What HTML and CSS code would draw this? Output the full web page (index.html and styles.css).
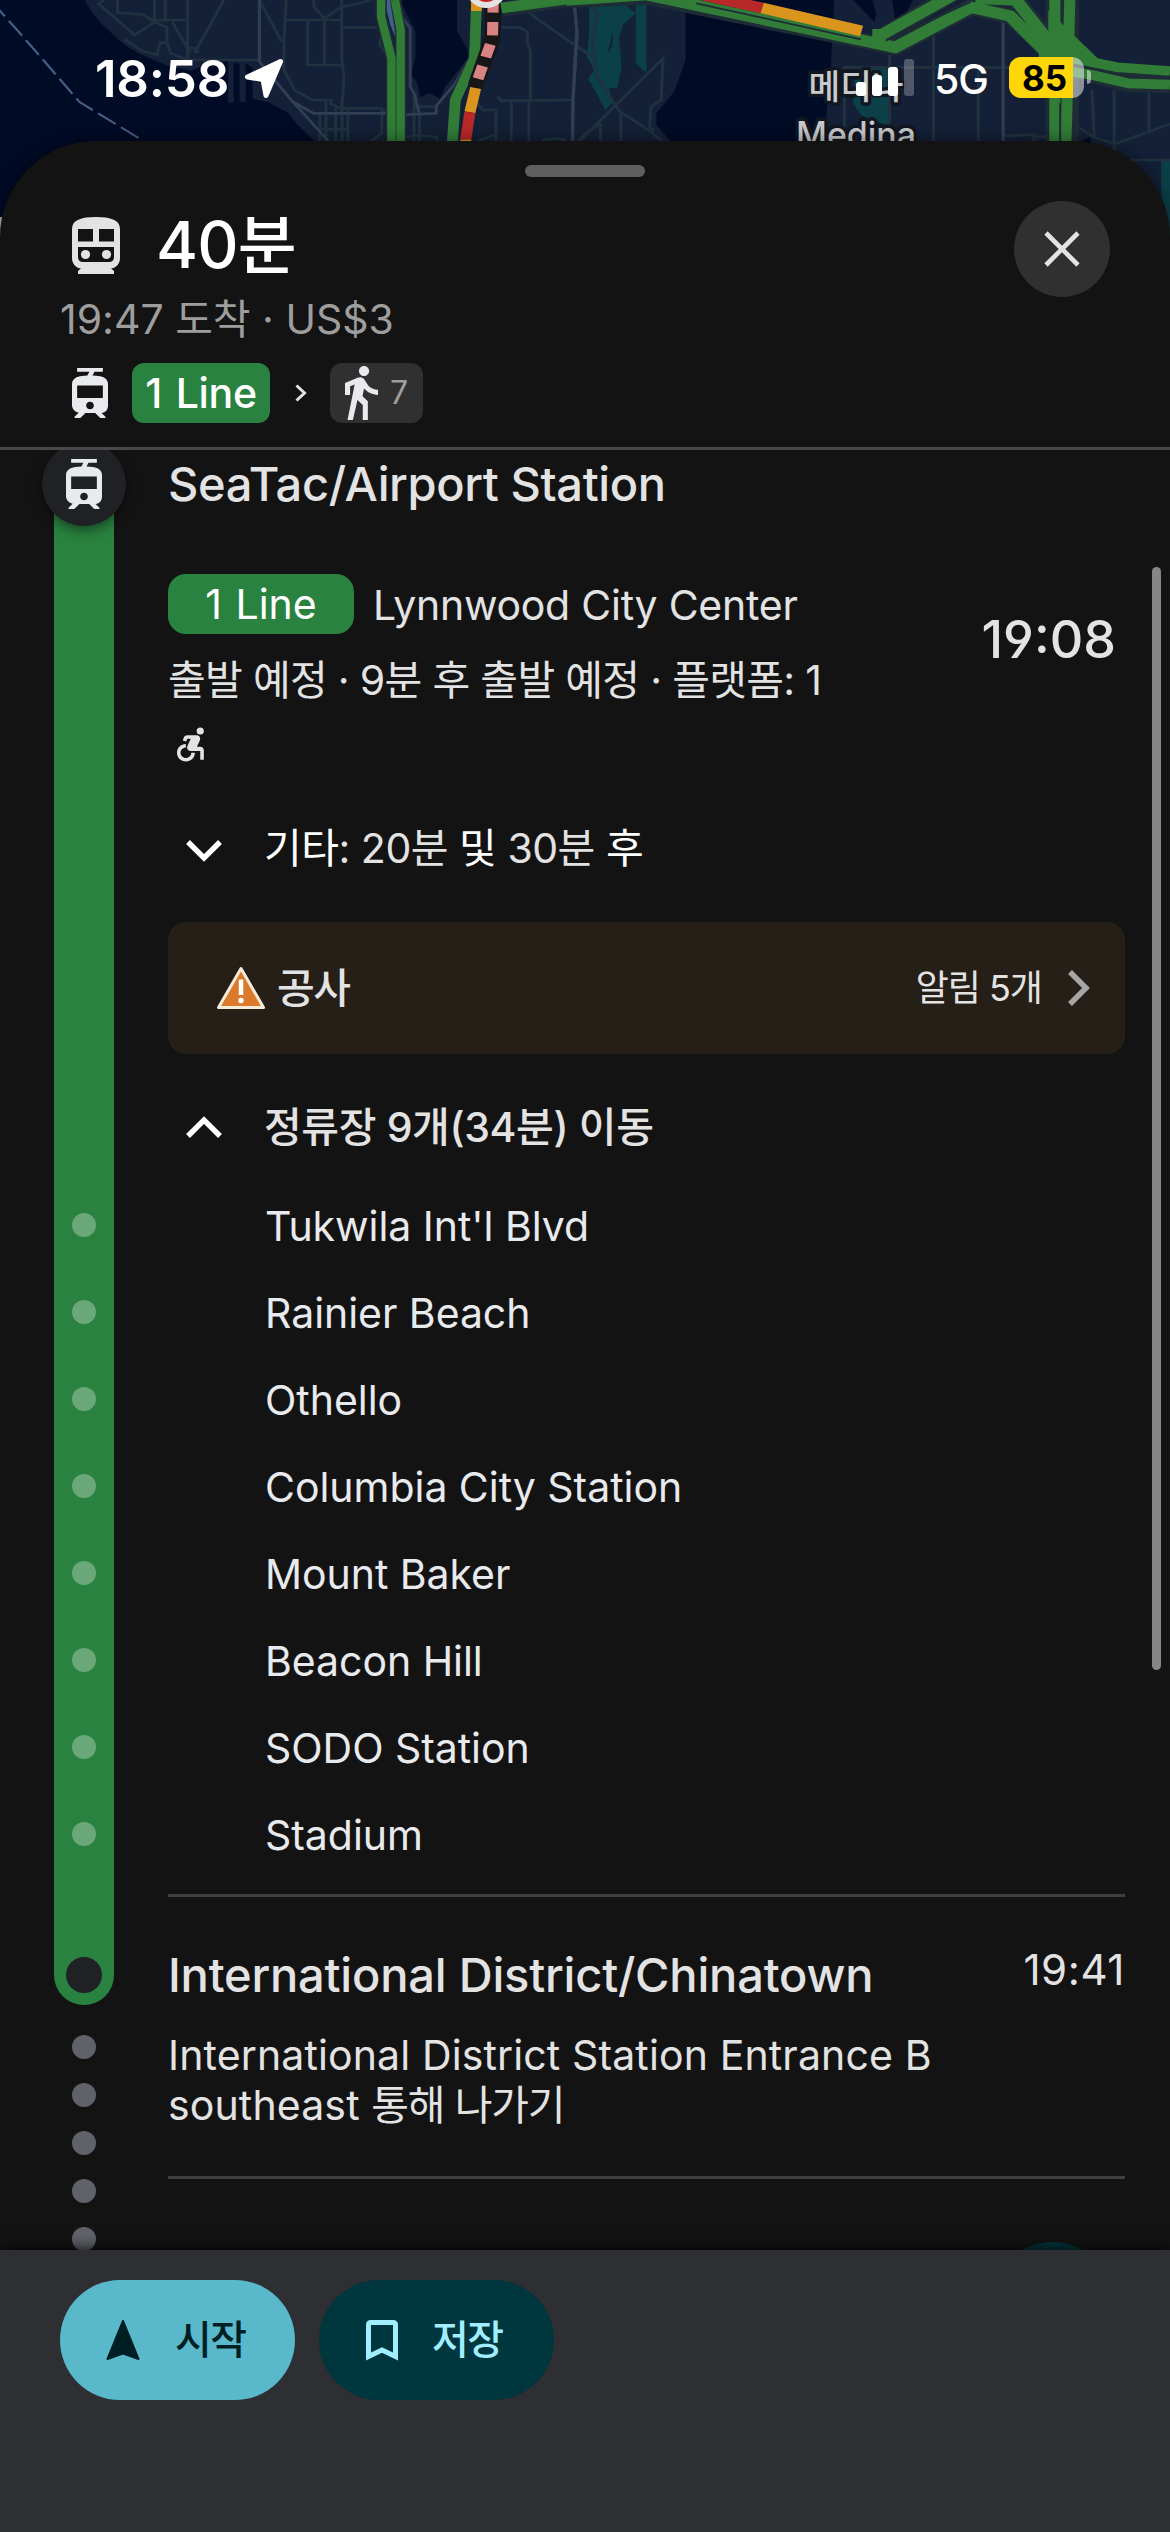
FILE: index.html
```html
<!DOCTYPE html>
<html lang="ko">
<head>
<meta charset="utf-8">
<title>40분 · 1 Line</title>
<link rel="stylesheet" href="styles.css">
</head>
<body>
<svg class="defs" width="0" height="0">
  <symbol id="tram" viewBox="5 2 14 20" preserveAspectRatio="none">
    <path d="M19 16.94V8.5c0-2.79-2.61-3.4-6.01-3.49l.76-1.51H17V2H7v1.5h4.75l-.76 1.52C7.86 5.11 5 5.73 5 8.5v8.44c0 1.45 1.19 2.66 2.59 2.97L6 21.5v.5h2.23l2-2H14l2 2h2v-.5L16.5 20h-.08c1.69 0 2.58-1.37 2.58-3.06zm-7 1.56c-.83 0-1.5-.67-1.5-1.5s.67-1.5 1.5-1.5 1.5.67 1.5 1.5-.67 1.5-1.5 1.5zm5-4.5H7V9h10v5z"/>
  </symbol>
</svg>
<div class="screen">
  <svg class="map" width="1170" height="270" viewBox="0 0 1170 270">
    <rect width="1170" height="270" fill="#132037"/>
    <g transform="scale(.38265 .33333)">
      <path fill="#000b26" d="M0 0H222L236 30L262 68L325 135L370 165L440 198L500 212L545 190L596 182V308H611V190H626V306H642V190L660 205V296L700 306L752 338L775 372L822 423V720H0Z"/>
      <path fill="#000b26" d="M1044 0L1058 30L1086 95V170L1075 225L1090 248L1098 292L1122 279L1150 296L1162 262L1222 176V150L1194 90V0Z"/>
      <path fill="#0b4049" d="M1545 15L1568 10V280L1538 240L1552 210L1537 170Z"/>
      <g fill="none" stroke="#20323f" stroke-width="8">
        <path d="M272 0L258 12L352 105L404 66L374 44L307 38V0M404 66V0M404 60H490M432 0V66M404 66L436 82V128H418L410 165L370 152L325 118M436 128L446 160L490 180H678M490 0V180M585 0L508 160M450 66L498 160M490 145H515V160M678 0L736 125M748 0L742 125V210L770 270L815 300H865V312L890 325H1000M748 60H893M804 60V195H893M848 60V195M893 0V175L899 235L893 325M820 0V20L848 55L893 20L925 14L970 0M893 82H985M1000 90L992 135L1012 165M852 300V423M877 325V423M894 325V423M909 325V423M836 340V423M836 388H912M998 325V400L970 423M1012 330H998M1082 290V423M1096 345V423M1082 320H1140M1050 412L1096 405L1142 412V423M1310 82H1358L1378 95V130L1386 150V300M1300 290L1310 302L1495 300M1240 300L1262 330H1296V423M1336 305V423M1382 305V423M1380 35L1408 60L1548 172M1415 420L1450 415L1480 420M1510 423L1530 400L1568 372M1250 423L1290 405"/>
      </g>
      <g fill="none" stroke="#303f55" stroke-width="8">
        <path d="M678 0V185L765 305L820 340H1010M765 305L858 423M1020 0L1072 85V260L1084 285L1096 344M1060 344L1140 340V318L1190 250L1225 180M1500 0L1507 90L1497 300V423"/>
      </g>
      <path fill="none" stroke="#465f87" stroke-width="6" stroke-dasharray="56 17" d="M-22 5L48 94L208 306L372 421"/>
      <path fill="#41608f" d="M1004 0L1020 75L1036 120L1022 0Z"/>
      <g fill="none" stroke="#1e2c35" stroke-width="30" stroke-linejoin="round">
        <path d="M996 0V50L1023 175V430M1034 0L1047 90V430M1244 20L1240 175L1190 290L1182 430"/>
      </g>
      <g fill="none" stroke="#317d38" stroke-linejoin="round">
        <path stroke-width="22" d="M996 0V50L1023 175V430M1032 0L1047 90V430"/>
        <path stroke-width="28" d="M1245 20L1240 175L1190 300L1182 430"/>
      </g>
      <path fill="none" stroke="#216a29" stroke-width="3" d="M1035 190V430"/>
      <path stroke="#db941e" stroke-width="28" d="M1245 0V33"/>
      <path fill="none" stroke="#161616" stroke-width="42" stroke-linejoin="round" stroke-linecap="round" d="M1289 0L1287 115L1245 250"/>
      <path fill="none" stroke="#d88383" stroke-width="29" stroke-dasharray="40 28" stroke-dashoffset="2" d="M1289 0L1287 115L1245 250"/>
      <path fill="none" stroke="#db941e" stroke-width="29" d="M1243 264L1228 337"/>
      <path fill="none" stroke="#b92829" stroke-width="29" d="M1228 337L1217 420"/>
      <path fill="none" stroke="#db941e" stroke-width="29" d="M1217 419V430"/>
      <path fill="none" stroke="#1e2c35" stroke-width="44" d="M1312 28L1590 -18"/>
      <path fill="none" stroke="#317d38" stroke-width="32" d="M1310 24L1590 -20"/>
      <ellipse cx="1271" cy="-38" rx="54" ry="62" fill="#e3e3e3"/>
      <ellipse cx="1271" cy="-38" rx="38" ry="44" fill="#c5221f"/>
    </g>
    <g transform="translate(570) scale(.38265 .33333)">
      <path fill="#000b26" d="M302 0V180L272 275L226 340V375L262 423H670V340L680 250L690 0ZM740 0L796 66L800 40L790 0ZM842 0L850 62L880 35L896 0Z"/>
      <path fill="#0b4049" d="M50 0H200V220L172 190V40L138 75L128 115L135 200L124 264H102L110 310L92 330L48 235L64 210L44 170L50 100Z"/>
      <path fill="#132037" d="M113 90L98 160L110 140ZM130 0L172 40V0Z"/>
      <path fill="#0b4049" d="M745 225L790 205H834V378L760 345L740 310ZM1545 482H1568V720H1545Z"/>
      <path fill="#000b26" d="M1340 420L1360 412V428H1340Z"/>
      <g fill="none" stroke="#20323f" stroke-width="8">
        <path d="M52 10L72 40L58 120L70 230L130 335L205 390L240 423M25 423L243 175L238 300L212 320L208 380L220 392M0 125L62 172M80 370V423M133 340V423M717 390V202H900L1250 203M835 165V423M950 100V423M1067 203V423M1132 408L1212 404V423M1212 410H1250M1320 375L1370 412L1424 432L1568 372M1364 270L1370 412M1422 270V480M1513 270V390M1424 480H1568M1190 20L1225 50L1245 100"/>
      </g>
      <path fill="none" stroke="#303f55" stroke-width="8" d="M12 20L19 100L8 300L6 423M1132 60V423"/>
      <g fill="none" stroke="#1e2c35" stroke-linejoin="round">
        <path stroke-width="48" d="M0 0L200 -10L850 142L1048 22L1150 48L1285 190M820 105L1000 -18M1140 -10L1165 0L1250 120M1267 0V430M1306 0V430M1320 180L1430 215L1568 222M1330 215L1460 253L1568 256"/>
      </g>
      <g fill="none" stroke="#317d38" stroke-linejoin="miter">
        <path stroke-width="34" d="M-10 0L200 -16L850 142L1048 22L1150 48L1260 175M790 104L815 104L1000 -14M1060 -5L1165 0L1255 130"/>
        <path stroke-width="29" d="M1267 0V425M1306 0L1302 180L1296 425M1300 172L1430 202L1568 213M1310 215L1365 225L1460 250L1568 254"/>
        <path stroke-width="60" d="M1225 160L1325 160L1280 110L1280 280"/>
      </g>
      <path stroke="#1e2c35" stroke-width="5" d="M1281 310V425M330 10L760 118M825 122L1048 5"/>
      <path stroke="#b92829" stroke-width="32" d="M350 -14L502 24"/>
      <path stroke="#db941e" stroke-width="32" d="M502 24L762 93"/>
    </g>
    <g class="place" text-anchor="middle">
      <text x="856" y="99" font-size="34" textLength="95" lengthAdjust="spacingAndGlyphs">메디나</text>
      <text x="856" y="147" font-size="35" textLength="120" lengthAdjust="spacingAndGlyphs">Medina</text>
    </g>
    <rect y="217" width="3" height="41" fill="#b8b8b8"/>
  </svg>

  <div class="status">
    <span class="clock">18:58</span>
    <svg class="locate" width="40" height="42" viewBox="0 0 40 42"><path d="M36.500 3.500L3.500 19L19 21.500L22 37.500Z" fill="#fff" stroke="#fff" stroke-width="5" stroke-linejoin="round"/></svg>
    <div class="signal"><i></i><i></i><i></i><i></i></div>
    <span class="net">5G</span>
    <div class="battery"><b>85</b></div>
    <i class="nub"></i>
  </div>

  <main class="sheet">
    <header class="head">
      <div class="handle"></div>
      <div class="top">
        <div class="summary">
          <div class="title">
            <svg width="48" height="57" viewBox="0 0 48 57"><path fill="#e3e3e3" fill-rule="evenodd" d="M0 12C0 3 9 0 24 0S48 3 48 12V41C48 47 44 51 39 51.500L42 54V57H6V54L9 51.500C4 51 0 47 0 41ZM6 12V24.500H21V12ZM27 12V24.500H42V12ZM6 30V40Q6 45 11 45H37Q42 45 42 40V30Z"/><circle cx="13.500" cy="37.500" r="4.600" fill="#e3e3e3"/><circle cx="34.500" cy="37.500" r="4.600" fill="#e3e3e3"/></svg>
            <h1>40분</h1>
          </div>
          <p class="arrive">19:47 도착 · US$3</p>
        </div>
        <button class="close" aria-label="닫기"><svg width="36" height="36" viewBox="0 0 36 36"><path d="M2 2L34 34M34 2L2 34" stroke="#e3e3e3" stroke-width="4.600"/></svg></button>
      </div>
      <div class="route">
        <svg class="tram" width="36" height="50"><use href="#tram"/></svg>
        <span class="line">1 Line</span>
        <svg class="sep" width="12" height="18" viewBox="0 0 12 18"><path d="M1.500 1.500L9.500 9L1.500 16.500" fill="none" stroke="#e3e3e3" stroke-width="3"/></svg>
        <span class="walk"><svg width="33" height="54" viewBox="6 1.500 13 21.500" preserveAspectRatio="none"><path fill="#e8eaed" d="M13.500 5.500c1.100 0 2-.9 2-2s-.9-2-2-2-2 .9-2 2 .9 2 2 2zM9.800 8.900L7 23h2.100l1.800-8 2.100 2v6h2v-7.500l-2.100-2 .6-3C14.800 12 16.800 13 19 13v-2c-1.900 0-3.500-1-4.300-2.400l-1-1.600c-.4-.6-1-1-1.700-1-.3 0-.5.1-.8.1L6 8.300V13h2V9.600l1.800-.7"/></svg><em>7</em></span>
      </div>
    </header>

    <section class="trip">
      <div class="rail">
        <div class="bar">
          <div class="origin"><svg class="tram" width="36" height="50"><use href="#tram"/></svg></div>
          <i></i><i></i><i></i><i></i><i></i><i></i><i></i><i></i>
          <div class="end"></div>
        </div>
        <div class="steps"><i></i><i></i><i></i><i></i><i></i></div>
      </div>

      <div class="legs">
        <h2 class="t-seatac">SeaTac/Airport Station</h2>
        <div class="depart">
          <div class="info">
            <div class="service"><span class="pill">1 Line</span><span class="t-dest">Lynnwood City Center</span></div>
            <p class="t-plan">출발 예정 · 9분 후 출발 예정 · 플랫폼: 1</p>
            <svg class="access" width="43" height="42" viewBox="0 0 24 24" preserveAspectRatio="none"><path fill="#e3e3e3" d="M15 17h-2c0 1.650-1.350 3-3 3s-3-1.350-3-3 1.350-3 3-3v-2c-2.760 0-5 2.240-5 5s2.240 5 5 5 5-2.240 5-5zm3-3.500h-1.860l1.670-3.670C18.420 8.500 17.440 7 15.960 7h-5.200c-.81 0-1.540.47-1.870 1.200L8.220 10l1.920.53.65-1.530h1.870l-1.830 4.100c-.6 1.330.39 2.900 1.850 2.900H18v5h2v-5.500c0-1.100-.9-2-2-2z"/><circle cx="18" cy="4.540" r="2" fill="#e3e3e3"/></svg>
          </div>
          <time class="big">19:08</time>
        </div>

        <div class="toggle other">
          <svg width="36" height="22" viewBox="0 0 36 22"><path d="M2 2L18 18L34 2" fill="none" stroke="#fff" stroke-width="5.400"/></svg>
          <span class="t-other"><b>기타</b>: 20분 <b>및</b> 30분 <b>후</b></span>
        </div>

        <div class="alert">
          <svg width="52" height="46" viewBox="0 0 52 46"><path d="M26 3.500L48.500 42.500H3.500Z" fill="#db7a2b" stroke="#f6ead9" stroke-width="3" stroke-linejoin="round"/><path d="M26 14.500V30" stroke="#fff" stroke-width="4.500"/><circle cx="26" cy="35.500" r="2.700" fill="#fff"/></svg>
          <strong class="t-work">공사</strong>
          <span class="t-count">알림 5개</span>
          <svg width="24" height="38" viewBox="0 0 24 38"><path d="M3 3L19 19L3 35" fill="none" stroke="#a6a6a6" stroke-width="5.500"/></svg>
        </div>

        <div class="toggle ride">
          <svg width="36" height="22" viewBox="0 0 36 22"><path d="M2 20L18 4L34 20" fill="none" stroke="#fff" stroke-width="5.400"/></svg>
          <span class="t-ride">정류장 9개(34분) 이동</span>
        </div>

        <ul class="stops">
          <li>Tukwila Int'l Blvd</li>
          <li>Rainier Beach</li>
          <li>Othello</li>
          <li>Columbia City Station</li>
          <li>Mount Baker</li>
          <li>Beacon Hill</li>
          <li>SODO Station</li>
          <li>Stadium</li>
        </ul>

        <div class="arrival">
          <h2 class="t-intl">International District/Chinatown</h2>
          <time>19:41</time>
        </div>
        <p class="exit">International District Station Entrance B<br>southeast <span class="via">통해 나가기</span></p>
        <div class="next"><i></i></div>
      </div>
      <div class="scrollbar"></div>
    </section>

    <footer class="actions">
      <button class="start"><svg width="36" height="44" viewBox="0 0 36 44"><path d="M18 3L33.500 41L18 35.500L2.500 41Z" fill="#001f24" stroke="#001f24" stroke-width="2" stroke-linejoin="round"/></svg>시작</button>
      <button class="save"><svg width="32" height="42" viewBox="0 0 32 42"><path d="M2.500 37.500V6Q2.500 3.500 5 3.500H27Q29.500 3.500 29.500 6V37.500L16 31Z" fill="none" stroke="#a0eeff" stroke-width="5"/></svg>저장</button>
    </footer>
  </main>
</div>
</body>
</html>
```
FILE: styles.css
```css
* { box-sizing: border-box; margin: 0; padding: 0; }
body {
  background: #131313;
  color: #e3e3e3;
  font-family: Inter, "Noto Sans CJK KR", sans-serif;
  font-size: 41px;
  line-height: 60px;
  white-space: nowrap;
}
i, em { font-style: normal; }
svg { display: block; flex: none; }
button { border: 0; font: inherit; color: inherit; }
.defs { position: absolute; }
.screen { position: relative; width: 1170px; height: 2532px; overflow: hidden; display: flex; flex-direction: column; }
.map { position: absolute; left: 0; top: 0; }
.place { fill: #c9cacb; stroke: #11161f; stroke-width: 7px; paint-order: stroke; stroke-linejoin: round; font-weight: 500; }

/* status bar */
.status { position: relative; height: 141px; flex: none; display: flex; align-items: flex-start; padding: 57px 0 0 95px; color: #fff; }
.clock { width: 149px; line-height: 44px; font-size: 51px; font-weight: 600; letter-spacing: -.2px; }
.locate { margin-top: 1px; }
.signal { display: flex; align-items: flex-end; gap: 6px; margin: 2px 0 0 572px; height: 37px; }
.signal i { width: 10px; border-radius: 3px; background: #fff; height: 14px; }
.signal i:nth-child(2) { height: 21px; }
.signal i:nth-child(3) { height: 29px; }
.signal i:nth-child(4) { height: 37px; opacity: .25; }
.net { margin-left: 20px; width: 75px; line-height: 45px; font-size: 41px; font-weight: 500; letter-spacing: -1px; }
.battery { width: 75px; height: 41px; border-radius: 12px; background: linear-gradient(90deg, #ffd60a 0 64px, rgba(255,255,255,.5) 64px); color: #000; padding-left: 13px; }
.battery b { display: block; font-size: 35px; line-height: 42px; font-weight: 700; }
.nub { width: 4px; height: 14px; margin: 13px 0 0 3px; border-radius: 0 4px 4px 0; background: rgba(255,255,255,.5); }

/* sheet */
.sheet { position: relative; flex: 1; min-height: 0; display: flex; flex-direction: column; background: #131313; border-radius: 96px 96px 0 0; box-shadow: 0 0 18px rgba(0,0,0,.45); }
.head { flex: none; height: 309px; border-bottom: 3px solid #484848; }
.handle { width: 120px; height: 12px; margin: 24px auto 0; border-radius: 6px; background: #5e5e5e; }
.top { display: flex; justify-content: space-between; margin-top: 24px; padding: 0 60px; }
.summary { margin-top: 14px; }
.title { display: flex; align-items: center; gap: 36px; height: 60px; padding-left: 12px; }
h1 { font-size: 64px; font-weight: 500; color: #fff; letter-spacing: -.8px; }
.arrive { margin-top: 14px; color: #9e9e9e; }
.close { width: 96px; height: 96px; border-radius: 50%; background: #303030; display: grid; place-items: center; }
.route { display: flex; align-items: center; height: 60px; margin: 14px 0 0 72px; }
.tram { fill: #e8eaed; }
.line { width: 138px; height: 60px; margin-left: 24px; border-radius: 12px; background: #29823f; color: #fff; font-weight: 500; text-align: center; letter-spacing: -.3px; word-spacing: 3px; }
.sep { margin-left: 25px; }
.walk { display: flex; align-items: center; gap: 12px; width: 93px; height: 60px; margin-left: 23px; padding-left: 15px; border-radius: 12px; background: #303030; }
.walk em { color: #9e9e9e; font-size: 32px; }

/* trip body */
.trip { position: relative; height: 1800px; flex: none; overflow: hidden; display: flex; }
.rail { width: 168px; flex: none; padding: 34px 0 0 54px; }
.bar { position: relative; width: 60px; height: 1521px; padding-top: 729px; background: #29823f; border-radius: 0 0 30px 30px; display: flex; flex-direction: column; align-items: center; gap: 63px; }
.bar > i { width: 24px; height: 24px; border-radius: 50%; background: #6aa879; flex: none; }
.origin { position: absolute; left: -12px; top: -42px; width: 84px; height: 84px; border-radius: 50%; background: #202125; box-shadow: 0 4px 12px rgba(0,0,0,.5); display: grid; place-items: center; }
.end { width: 36px; height: 36px; margin-top: 48px; flex: none; border-radius: 50%; background: #202125; }
.steps { display: flex; flex-direction: column; gap: 24px; width: 60px; padding-top: 30px; align-items: center; }
.steps i { width: 24px; height: 24px; border-radius: 50%; background: #5f6268; }
.legs { width: 957px; flex: none; padding-top: 4px; }
h2 { font-size: 47px; font-weight: 500; }
.t-seatac { letter-spacing: -.38px; }
.t-intl { letter-spacing: -.2px; }
.depart { display: flex; justify-content: space-between; margin-top: 60px; }
.service { display: flex; align-items: center; gap: 19px; height: 60px; }
.pill { width: 186px; height: 60px; border-radius: 18px; background: #29823f; color: #fff; text-align: center; word-spacing: 2px; }
.t-dest { padding-top: 2px; letter-spacing: -.25px; }
.t-plan { margin-top: 16px; letter-spacing: -.68px; }
.access { margin-top: 13px; }
.big { margin: 36px 9px 0 0; font-size: 52px; font-weight: 500; font-feature-settings: "cv04"; }
.toggle { display: flex; align-items: center; gap: 42px; padding-left: 18px; height: 60px; }
.other { margin-top: 53px; }
.other svg { margin-top: 5px; }
.t-other { letter-spacing: -.48px; }
.toggle b { font-weight: 400; color: #fff; }
.alert { display: flex; align-items: center; height: 132px; margin-top: 44px; padding: 0 34px 0 47px; border-radius: 18px; background: #261f17; }
.t-work { margin-left: 10px; font-weight: 500; letter-spacing: -1.5px; }
.t-count { margin: 0 25px 0 auto; font-size: 36px; letter-spacing: -1px; }
.ride { margin-top: 43px; }
.t-ride { font-weight: 500; letter-spacing: -.36px; }
.stops { list-style: none; margin: 26px 0 0; padding: 0 0 15px 97px; border-bottom: 3px solid #3c4043; }
.stops li { height: 87px; line-height: 87px; color: #e8eaed; letter-spacing: -.04px; }
.arrival { display: flex; justify-content: space-between; padding-top: 48px; }
.arrival time { margin-top: -5px; font-size: 42px; letter-spacing: .6px; }
.exit { margin-top: 25px; padding-bottom: 46px; line-height: 50px; border-bottom: 3px solid #3c4043; letter-spacing: .13px; }
.via { letter-spacing: -1.2px; }
.next { display: flex; justify-content: flex-end; padding: 63px 12px 0 0; }
.next i { width: 120px; height: 120px; border-radius: 50%; background: #00363d; }
.scrollbar { width: 9px; height: 1103px; margin: 117px 0 0 27px; border-radius: 5px; background: #868686; }

/* bottom actions */
.actions { position: relative; height: 282px; flex: none; display: flex; gap: 24px; padding: 30px 60px; background: #2e2f33; box-shadow: 0 -3px 12px rgba(0,0,0,.7); }
.actions button { width: 235px; height: 120px; border-radius: 60px; display: flex; align-items: center; padding-left: 45px; gap: 34px; font-size: 40px; font-weight: 500; letter-spacing: -1.5px; }
.start { background: #5ab8cb; color: #001f24; }
.actions .save { padding-left: 47px; background: #00363d; color: #a0eeff; }
```
